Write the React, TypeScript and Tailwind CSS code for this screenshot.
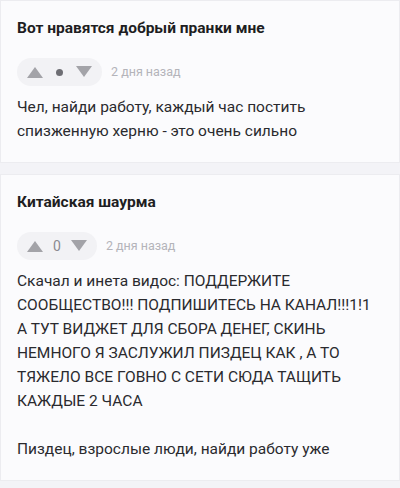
import React from "react";

type Post = {
  title: string;
  score: string;
  scoreIsDot?: boolean;
  age: string;
  body: string[];
};

const posts: Post[] = [
  {
    title: "Вот нравятся добрый пранки мне",
    score: "•",
    scoreIsDot: true,
    age: "2 дня назад",
    body: ["Чел, найди работу, каждый час постить спизженную херню - это очень сильно"],
  },
  {
    title: "Китайская шаурма",
    score: "0",
    age: "2 дня назад",
    body: [
      "Скачал и инета видос: ПОДДЕРЖИТЕ СООБЩЕСТВО!!! ПОДПИШИТЕСЬ НА КАНАЛ!!!1!1 А ТУТ ВИДЖЕТ ДЛЯ СБОРА ДЕНЕГ, СКИНЬ НЕМНОГО Я ЗАСЛУЖИЛ ПИЗДЕЦ КАК , А ТО ТЯЖЕЛО ВСЕ ГОВНО С СЕТИ СЮДА ТАЩИТЬ КАЖДЫЕ 2 ЧАСА",
      "",
      "Пиздец, взрослые люди, найди работу уже",
    ],
  },
];

function Arrow({ down }: { down?: boolean }) {
  return (
    <svg width="16" height="12" viewBox="0 0 16 12" className="block">
      {down ? (
        <polygon points="0,0 16,0 8,11" fill="#a3a3a8" />
      ) : (
        <polygon points="8,1 16,12 0,12" fill="#a3a3a8" />
      )}
    </svg>
  );
}

function Card({ post }: { post: Post }) {
  return (
    <div className="bg-[#fbfbfd] border border-[#ececf0] px-4 pt-4 pb-[19px]">
      <div className="text-[15.5px] leading-[22px] font-bold text-[#1e1e22]">{post.title}</div>
      <div className="mt-[19px] flex items-center gap-[9px]">
        <div className="h-[28px] rounded-full bg-[#f2f2f5] flex items-center px-[10px] gap-[10px]">
          <Arrow />
          {post.scoreIsDot ? (
            <span className="w-[7px] h-[7px] rounded-full bg-[#6e6e74] mx-[3px]" />
          ) : (
            <span className="text-[14px] text-[#8a8a90] leading-none">{post.score}</span>
          )}
          <Arrow down />
        </div>
        <span className="text-[12.5px] text-[#b4b4ba]">{post.age}</span>
      </div>
      <div className="mt-[9px] text-[15.5px] leading-[24px] text-[#2a2a2e]">
        {post.body.map((p, i) =>
          p === "" ? <div key={i} className="h-[24px]" /> : <p key={i}>{p}</p>
        )}
      </div>
    </div>
  );
}

export default function App() {
  return (
    <div
      className="w-[400px] h-[488px] bg-[#f3f3f7] flex flex-col gap-[11px] overflow-hidden"
      style={{ fontFamily: "Roboto, 'Noto Sans', sans-serif" }}
    >
      {posts.map((p, i) => (
        <Card key={i} post={p} />
      ))}
    </div>
  );
}
